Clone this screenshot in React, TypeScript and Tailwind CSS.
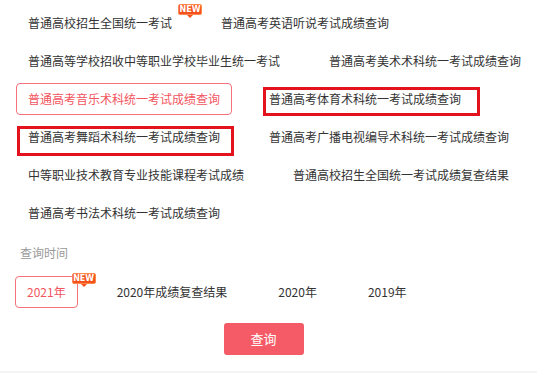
import React from "react";

type Item = { label: string; active?: boolean; isNew?: boolean; mark?: string };

const exams: Item[] = [
  { label: "普通高校招生全国统一考试", isNew: true },
  { label: "普通高考英语听说考试成绩查询" },
  { label: "普通高等学校招收中等职业学校毕业生统一考试" },
  { label: "普通高考美术术科统一考试成绩查询" },
  { label: "普通高考音乐术科统一考试成绩查询", active: true },
  { label: "普通高考体育术科统一考试成绩查询", mark: "left-[5px] top-[3px] -right-[8px] -bottom-[2px]" },
  { label: "普通高考舞蹈术科统一考试成绩查询", mark: "left-0 top-[4px] -right-[3px] -bottom-[4px]" },
  { label: "普通高考广播电视编导术科统一考试成绩查询" },
  { label: "中等职业技术教育专业技能课程考试成绩" },
  { label: "普通高校招生全国统一考试成绩复查结果" },
  { label: "普通高考书法术科统一考试成绩查询" },
];

const years: Item[] = [
  { label: "2021年", active: true, isNew: true },
  { label: "2020年成绩复查结果" },
  { label: "2020年" },
  { label: "2019年" },
];

const NewBadge = () => (
  <span className="absolute -right-[19px] -top-[4px] flex flex-col items-start">
    <span className="w-6 h-[11px] flex items-center justify-center rounded-[2px] bg-[#f4521c] text-white text-[8px] leading-none font-black font-['DejaVu_Sans',sans-serif] border border-[#ff8a4d]">
      NEW
    </span>
    <span className="ml-[9px] w-0 h-0 border-l-[3px] border-l-transparent border-r-[3px] border-r-transparent border-t-[3px] border-t-[#f4521c]" />
  </span>
);

const Chip = ({ item }: { item: Item }) => (
  <div
    className={
      "relative h-8 px-[11px] flex items-center rounded-[4px] border text-xs whitespace-nowrap " +
      (item.active ? "border-[#f4707a] text-[#f25560]" : "border-transparent text-[#333]")
    }
  >
    {item.label}
    {item.isNew && <NewBadge />}
    {item.mark && <span className={"absolute border-[3px] border-[#e3121d] " + item.mark} />}
  </div>
);

export default function App() {
  return (
    <div className="w-[537px] h-[373px] overflow-hidden bg-white flex flex-col font-['Noto_Sans_CJK_SC','Noto_Sans',sans-serif]">
      <div className="flex flex-wrap gap-x-[25px] gap-y-[6px] pl-4 pt-[7px]">
        {exams.map((e) => (
          <Chip key={e.label} item={e} />
        ))}
      </div>

      <div className="mt-4 pl-5 text-xs leading-4 text-[#999]">查询时间</div>

      <div className="flex gap-x-[27px] pl-[15px] mt-[15px]">
        {years.map((y) => (
          <Chip key={y.label} item={y} />
        ))}
      </div>

      <div className="flex justify-center pr-[10px] mt-[15px]">
        <button className="w-20 h-8 rounded-[3px] bg-[#f55b66] text-white text-[13px]">查询</button>
      </div>

      <div className="mt-auto h-[2px] bg-[#f4f4f4]" />
    </div>
  );
}
